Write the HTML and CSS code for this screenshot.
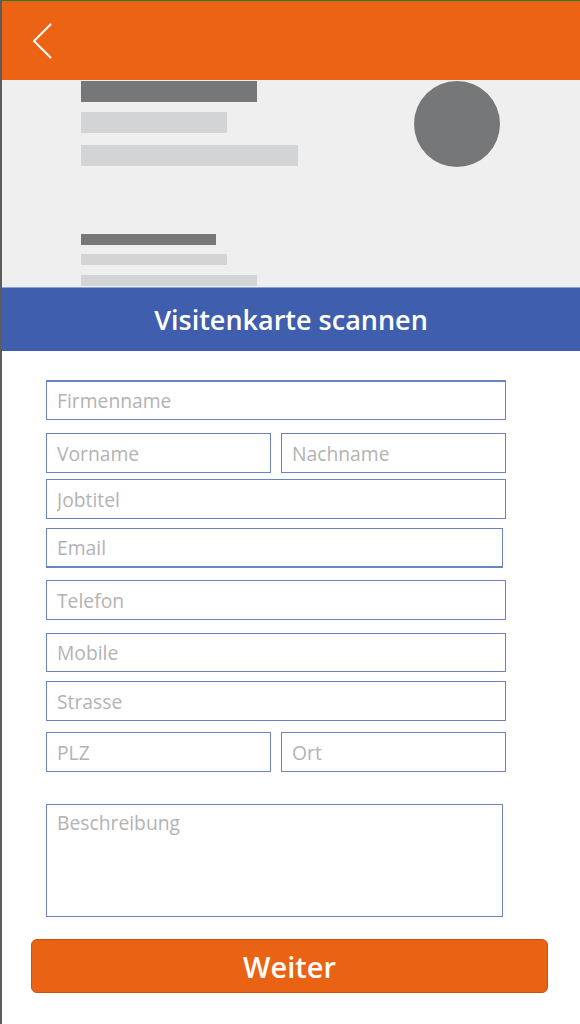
FILE: index.html
```html
<!DOCTYPE html>
<html lang="de">
<head>
  <meta charset="UTF-8">
  <meta name="viewport" content="width=device-width, initial-scale=1.0">
  <title>Visitenkarte scannen</title>
  <link rel="stylesheet" href="styles.css">
</head>
<body>
  <header class="topbar">
    <svg class="back" width="20" height="36" viewBox="0 0 20 36">
      <polyline points="18,1 1,18 18,35" fill="none" stroke="#fff" stroke-width="2"/>
    </svg>
  </header>

  <!-- Platzhalter für die gescannte Karte -->
  <div class="card">
    <div class="card-lines">
      <div class="line dark big w176"></div>
      <div class="line light big w146 mt10"></div>
      <div class="line light big w217 mt12"></div>
      <div class="line dark small w135 mt68"></div>
      <div class="line light small w146 mt9"></div>
      <div class="line light small w176 mt10"></div>
    </div>
    <div class="avatar"></div>
  </div>

  <h1 class="title">Visitenkarte scannen</h1>

  <form class="form">
    <input class="field first" type="text" placeholder="Firmenname">
    <div class="row gap13">
      <input class="field half" type="text" placeholder="Vorname">
      <input class="field half" type="text" placeholder="Nachname">
    </div>
    <input class="field gap6" type="text" placeholder="Jobtitel">
    <input class="field narrow email gap9" type="text" placeholder="Email">
    <input class="field gap12" type="text" placeholder="Telefon">
    <input class="field short gap13" type="text" placeholder="Mobile">
    <input class="field gap9" type="text" placeholder="Strasse">
    <div class="row gap11">
      <input class="field half" type="text" placeholder="PLZ">
      <input class="field half" type="text" placeholder="Ort">
    </div>
    <textarea class="field narrow notes" placeholder="Beschreibung"></textarea>
    <button type="button" class="next">Weiter</button>
  </form>
</body>
</html>
```

FILE: styles.css
```css
* { box-sizing: border-box; }
html, body { margin: 0; padding: 0; }
body { font-family: "Open Sans", "Noto Sans", sans-serif; background: #fff; border-left: 2px solid #5c5c5c; border-top: 1px solid #1f7a3c; min-height: 1024px; width: 580px; }

.topbar { height: 79px; background: #ec6314; display: flex; align-items: center; }
.back { margin-left: 31px; display: block; }

.card { height: 207px; background: #efefef; display: flex; overflow: hidden; }
.card-lines { margin-left: 79px; padding-top: 1px; display: flex; flex-direction: column; }
.line { flex: none; }
.line.dark { background: #767778; }
.line.light { background: #d3d4d5; }
.line.big { height: 21px; }
.line.small { height: 11px; }
.w135 { width: 135px; }
.w146 { width: 146px; }
.w176 { width: 176px; }
.w217 { width: 217px; }
.mt9 { margin-top: 9px; }
.mt10 { margin-top: 10px; }
.mt12 { margin-top: 12px; }
.mt68 { margin-top: 68px; }
.avatar { width: 86px; height: 86px; border-radius: 50%; background: #767778; margin: 1px 0 0 auto; margin-right: 80px; }

.title { margin: 0; height: 64px; background: #3f5fae; color: #fff; font-size: 27px; font-weight: 600; display: flex; align-items: center; justify-content: center; border-top: 1px solid #8fa3d6; }

.form { display: flex; flex-direction: column; padding: 29px 0 0 44px; }
.field { font-family: inherit; font-size: 19.3px; height: 40px; width: 460px; border: 1px solid #6a84c2; padding: 0 10px; color: #333; background: #fff; outline: none; margin: 0; }
.field::placeholder { color: #b3b3b3; }
.field.first { border-top-width: 2px; }
.narrow { width: 457px; }
.short { height: 39px; }
.email { border-bottom-width: 2px; }
.row { display: flex; gap: 10px; }
.half { width: 225px; }
.gap6 { margin-top: 6px; }
.gap9 { margin-top: 9px; }
.gap11 { margin-top: 11px; }
.gap12 { margin-top: 12px; }
.gap13 { margin-top: 13px; }
.notes { height: 113px; margin-top: 32px; padding-top: 4px; resize: none; }

.next { margin: 22px 0 0 -15px; width: 517px; height: 54px; background: #ea6314; border: 1px solid #c9520c; border-radius: 6px; color: #fff; font-family: inherit; font-size: 29px; font-weight: 600; cursor: pointer; }
```
